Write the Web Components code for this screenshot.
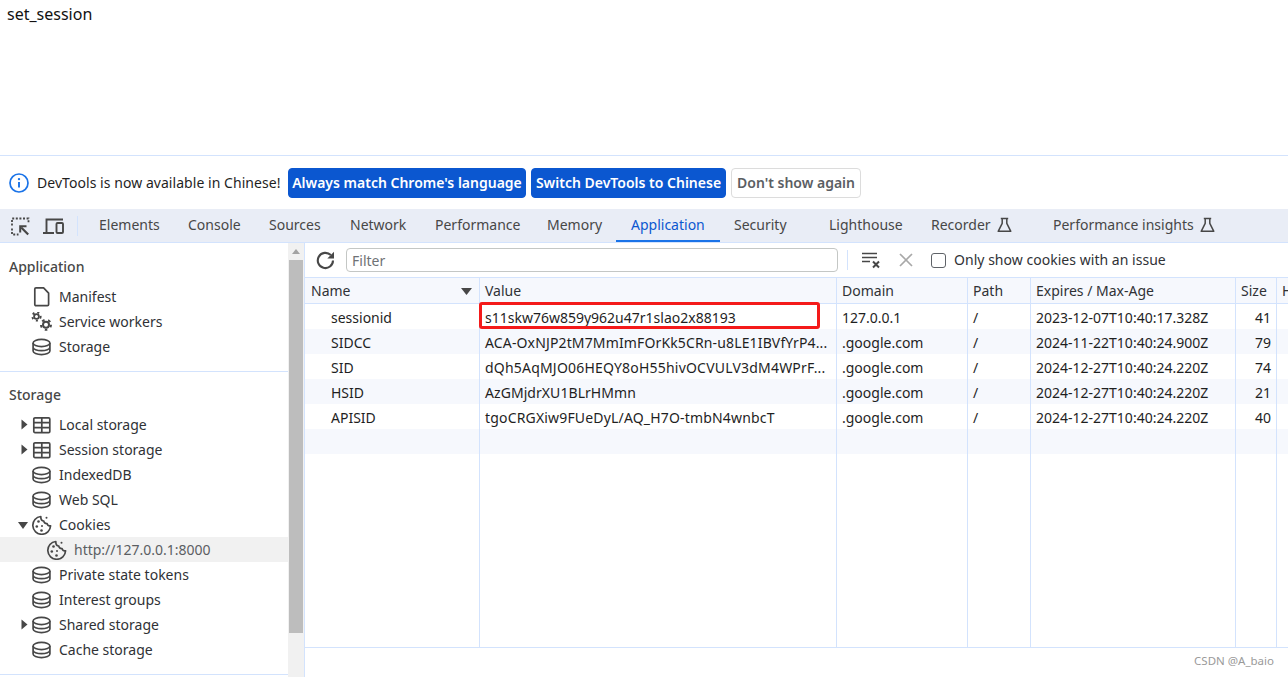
<!DOCTYPE html>
<html>
<head>
<meta charset="utf-8">
<title>set_session</title>
<style>
  html, body { margin: 0; height: 100%; overflow: hidden; background: #fff; }
  body { font-family: "Noto Sans", "Open Sans", sans-serif; font-size: 14px; color: #303236; }
</style>
</head>
<body>
<set-session-page></set-session-page>
<devtools-infobar></devtools-infobar>
<devtools-tabs></devtools-tabs>
<devtools-panel></devtools-panel>

<script>
const INK = '#474747';

// teeth are a dashed ring round a plain ring
const gear = (cx, cy, r, w, dash, gap) => `
  <circle cx="${cx}" cy="${cy}" r="${r}" fill="none" stroke="${INK}" stroke-width="${w}"/>
  <circle cx="${cx}" cy="${cy}" r="${r + w}" fill="none" stroke="${INK}" stroke-width="${w}" stroke-dasharray="${dash} ${gap}"/>`;

const ICONS = {
  db: `<svg width="20" height="20" viewBox="0 0 20 20" fill="none" stroke="${INK}" stroke-width="1.7"><ellipse cx="10.500" cy="6" rx="8.400" ry="3.600"/><path d="M2.100 6v8c0 2 3.800 3.600 8.400 3.600s8.400-1.600 8.400-3.600V6M2.100 10.200c0 2 3.800 3.500 8.400 3.500s8.400-1.500 8.400-3.500"/></svg>`,
  table: `<svg width="20" height="20" viewBox="0 0 20 20" fill="none" stroke="${INK}" stroke-width="1.700"><rect x="2.800" y="2.800" width="16" height="14.800" rx="1.200"/><path d="M2.800 7.700h16M2.800 12.600h16M10.800 2.800v14.800"/></svg>`,
  page: `<svg width="20" height="20" viewBox="0 0 20 20" fill="none" stroke="${INK}" stroke-width="1.700" stroke-linejoin="round"><path d="M5 .9h7.600l5 5.200v11.400a1.200 1.200 0 0 1-1.200 1.200H5a1.200 1.200 0 0 1-1.200-1.200V2.100A1.200 1.200 0 0 1 5 .9z"/></svg>`,
  gears: `<svg width="22" height="20" viewBox="0 0 22 20">${gear(5.500, 4.500, 2.400, 1.800, 2.100, 2.900)}${gear(15, 12.800, 3, 2, 2.600, 3.680)}</svg>`,
  cookie: `<svg width="21" height="20" viewBox="0 0 21 20" fill="none" stroke="${INK}" stroke-width="1.700"><path d="M9.800 1.500a8.900 8.900 0 1 0 9.800 9.300c-1.700.3-3.100-.6-3.500-2.200-1.700.2-3.200-.9-3.300-2.600C10.900 5.800 9.700 3.900 9.800 1.500z" stroke-linejoin="round"/><g fill="${INK}" stroke="none"><circle cx="7.500" cy="6.500" r="1.300"/><circle cx="5.800" cy="11.500" r="1.300"/><circle cx="11" cy="11" r="1"/><circle cx="10.500" cy="15.500" r="1.300"/><circle cx="15.500" cy="2.800" r="1"/></g></svg>`,
  flask: `<svg width="15" height="16" viewBox="0 0 15 16" fill="none" stroke="${INK}" stroke-width="1.500" stroke-linejoin="round"><path d="M3.800 1.500h7.400M5.200 1.500v4.800L1.200 14.300h12.600L9.800 6.300V1.500"/></svg>`
};

class SetSessionPage extends HTMLElement {
  constructor() {
    super();
    this.attachShadow({ mode: 'open' }).innerHTML = `
      <style>
        :host { display: block; height: 155px; box-sizing: border-box; padding: 4px 7px; background: #fff; }
        span { font: 16px/20px "Noto Sans", sans-serif; color: #111; }
      </style>
      <span>set_session</span>`;
  }
}

class DevtoolsInfobar extends HTMLElement {
  constructor() {
    super();
    this.attachShadow({ mode: 'open' }).innerHTML = `
      <style>
        :host { display: flex; align-items: center; height: 54px; box-sizing: border-box; border-top: 1px solid #d3e3fd; background: #fff; padding: 0 0 0 9px; color: #1f1f1f; }
        svg { margin-right: 8px; }
        .msg { width: 251px; white-space: nowrap; letter-spacing: .05px; }
        button { font: inherit; height: 30px; padding: 0; border-radius: 4px; border: 1px solid #0b57d0; background: #0b57d0; color: #fff; font-weight: 600; margin-right: 5px; white-space: nowrap; }
        button.plain { background: #fff; border-color: #dcdcdc; color: #5b5e63; }
      </style>
      <svg width="20" height="20" viewBox="0 0 20 20" fill="none"><circle cx="10" cy="10" r="9" stroke="#1a73e8" stroke-width="1.700"/><path d="M10 9v5.500" stroke="#1a73e8" stroke-width="1.900"/><circle cx="10" cy="6.100" r="1.200" fill="#1a73e8"/></svg>
      <span class="msg">DevTools is now available in Chinese!</span>
      <button style="width:238px">Always match Chrome's language</button>
      <button style="width:195px">Switch DevTools to Chinese</button>
      <button class="plain" style="width:130px">Don't show again</button>`;
  }
}

class DevtoolsTabs extends HTMLElement {
  constructor() {
    super();
    // tab widths are taken from the reference, not from the text
    const tabs = [
      ['Elements', 89], ['Console', 81], ['Sources', 81], ['Network', 85], ['Performance', 112],
      ['Memory', 83], ['Application', 104, 'active'], ['Security', 95], ['Lighthouse', 102],
      ['Recorder', 122, 'lab'], ['Performance insights', 180, 'lab']
    ];
    this.attachShadow({ mode: 'open' }).innerHTML = `
      <style>
        :host { display: flex; height: 34px; box-sizing: border-box; background: #e9edf6; border-bottom: 1px solid #d3e3fd; color: #474747; }
        .tools { display: flex; align-items: center; width: 85px; height: 33px; box-sizing: border-box; padding-left: 10px; flex: none; }
        .tools svg + svg { margin-left: 13px; }
        .sep { width: 1px; height: 20px; background: #d3e3fd; margin-left: 13px; }
        .tab { box-sizing: border-box; display: flex; align-items: center; gap: 6px; padding: 0 0 2px 14px; height: 33px; white-space: nowrap; flex: none; }
        .tab.active { color: #0b57d0; border-bottom: 2px solid #1a73e8; padding: 0 0 0 15px; }
        .tab svg { flex: none; }
      </style>
      <div class="tools">
        <svg width="20" height="20" viewBox="0 0 20 20" fill="none" stroke="${INK}" stroke-width="1.800"><path d="M2 9.500V2.500h16.500v5" stroke-dasharray="2 1.600"/><path d="M2 12.500v6h6.500" stroke-dasharray="2 1.600"/><path d="M18.200 18.500l-7-7" stroke-width="2.200"/><path d="M10.200 16.500v-6.300h6.300" stroke-width="2"/></svg>
        <svg width="21" height="20" viewBox="0 0 21 20" fill="none" stroke="${INK}" stroke-width="1.900"><path d="M3.500 16V3.500H20M0 17h11"/><rect x="13.500" y="7" width="6.500" height="10" rx="1"/></svg>
        <span class="sep"></span>
      </div>
      ${tabs.map(([name, w, kind]) => `<div class="tab ${kind || ''}" style="width:${w}px"><span>${name}</span>${kind === 'lab' ? ICONS.flask : ''}</div>`).join('')}`;
  }
}

class TreeItem extends HTMLElement {
  constructor() {
    super();
    this.attachShadow({ mode: 'open' });
  }
  connectedCallback() {
    const icon = ICONS[this.getAttribute('icon')] || ICONS.db;
    const arrow = this.getAttribute('arrow');
    const level = +(this.getAttribute('level') || 0);
    const tri = arrow === 'right'
      ? `<svg width="7" height="11" viewBox="0 0 7 11"><path d="M.5.500l6 5-6 5z" fill="${INK}"/></svg>`
      : arrow === 'down'
        ? `<svg width="10" height="7" viewBox="0 0 10 7"><path d="M0 0h10L5 7z" fill="${INK}"/></svg>`
        : '';
    this.shadowRoot.innerHTML = `
      <style>
        :host { display: flex; align-items: center; height: 25px; box-sizing: border-box; padding-left: ${level ? 46 : 31}px; position: relative; white-space: nowrap; color: #303236; }
        :host([selected]) { background: #f1f1f1; color: #5b5e63; }
        .arrow { position: absolute; left: ${arrow === 'down' ? 18 : 21}px; top: ${arrow === 'down' ? 10 : 7}px; display: flex; }
        .icon { width: 28px; display: flex; align-items: center; flex: none; }
      </style>
      <span class="arrow">${tri}</span>
      <span class="icon">${icon}</span>
      <slot></slot>`;
  }
}

class SideGroup extends HTMLElement {
  constructor() {
    super();
    this.attachShadow({ mode: 'open' }).innerHTML = `
      <style>
        :host { display: block; border-bottom: 1px solid #d3e3fd; padding-bottom: 12px; }
        h3 { margin: 0; padding: 12px 0 4px 9px; height: 25px; font: 500 14px/24px "Noto Sans", sans-serif; color: #474747; }
        :host([tight]) h3 { padding-top: 11px; }
      </style>
      <h3><slot name="title"></slot></h3>
      <slot></slot>`;
  }
}

class CookieTable extends HTMLElement {
  constructor() {
    super();
    const cols = '175px 357px 131px 63px 205px 41px 1fr';
    const rows = [
      ['sessionid', 's11skw76w859y962u47r1slao2x88193', '127.0.0.1', '/', '2023-12-07T10:40:17.328Z', '41', 0],
      ['SIDCC', 'ACA-OxNJP2tM7MmImFOrKk5CRn-u8LE1IBVfYrP4...', '.google.com', '/', '2024-11-22T10:40:24.900Z', '79', .14],
      ['SID', 'dQh5AqMJO06HEQY8oH55hivOCVULV3dM4WPrF...', '.google.com', '/', '2024-12-27T10:40:24.220Z', '74', .2],
      ['HSID', 'AzGMjdrXU1BLrHMmn', '.google.com', '/', '2024-12-27T10:40:24.220Z', '21', .06],
      ['APISID', 'tgoCRGXiw9FUeDyL/AQ_H7O-tmbN4wnbcT', '.google.com', '/', '2024-12-27T10:40:24.220Z', '40', .17],
      ['', '', '', '', '', '', 0]
    ];
    const heads = ['Name', 'Value', 'Domain', 'Path', 'Expires / Max-Age', 'Size', 'H'];
    this.attachShadow({ mode: 'open' }).innerHTML = `
      <style>
        :host { display: flex; flex-direction: column; flex: 1; min-height: 0; position: relative; border-top: 1px solid #d3e3fd; color: #1f1f1f; }
        .row { display: grid; grid-template-columns: ${cols}; height: 25px; flex: none; }
        .row > div { box-sizing: border-box; padding: 0 5px; line-height: 27px; white-space: nowrap; overflow: hidden; border-right: 1px solid #d3e3fd; }
        .row > div:last-child { border-right: 0; }
        .head { height: 26px; background: #f6f8fd; border-bottom: 1px solid #d3e3fd; box-sizing: border-box; color: #303236; }
        .row.head > div { line-height: 26px; position: relative; }
        .head > div:first-child { padding-left: 6px; }
        .row:nth-of-type(odd):not(.head) { background: #f6f8fd; }
        .row > .name { padding-left: 26px; }
        .size { text-align: right; }
        .tri { position: absolute; right: 7px; top: 10px; }
        .rest { flex: 1; display: grid; grid-template-columns: ${cols}; border-bottom: 1px solid #d3e3fd; min-height: 0; }
        .rest > div { border-right: 1px solid #d3e3fd; }
        .rest > div:last-child { border-right: 0; }
        .foot { height: 29px; flex: none; }
        .mark { position: absolute; left: 174px; top: 24px; width: 341px; height: 27px; box-sizing: border-box; border: 3px solid #f41a1a; border-radius: 3px; }
        .wm { position: absolute; right: 14px; bottom: 9px; font: 11.500px "Noto Sans", sans-serif; color: #9a9a9a; }
      </style>
      <div class="row head">${heads.map((h, i) => `<div>${h}${i === 0 ? `<svg class="tri" width="11" height="7" viewBox="0 0 11 7"><path d="M0 0h11L5.500 7z" fill="${INK}"/></svg>` : ''}</div>`).join('')}</div>
      ${rows.map(r => `<div class="row">${r.slice(0, 6).map((c, i) => `<div class="${i === 0 ? 'name' : i === 5 ? 'size' : ''}"${i === 1 ? ` style="letter-spacing:${r[6]}px"` : ''}>${c}</div>`).join('')}<div></div></div>`).join('')}
      <div class="rest">${heads.map(() => '<div></div>').join('')}</div>
      <div class="foot"></div>
      <div class="mark"></div>
      <div class="wm">CSDN @A_baio</div>`;
  }
}

class DevtoolsPanel extends HTMLElement {
  constructor() {
    super();
    this.attachShadow({ mode: 'open' }).innerHTML = `
      <style>
        :host { display: flex; height: 434px; background: #fff; }
        .side { width: 288px; flex: none; overflow: hidden; }
        .scroll { width: 16px; flex: none; background: #f1f1f1; border-right: 1px solid #d3e3fd; display: flex; flex-direction: column; align-items: center; }
        .scroll .up { margin-top: 6px; width: 0; height: 0; border: 4px solid transparent; border-top: 0; border-bottom: 5px solid #a3a3a3; }
        .scroll .thumb { margin-top: 6px; width: 14px; height: 373px; background: #bdbdbd; }
        .main { flex: 1; min-width: 0; display: flex; flex-direction: column; }
        .bar { display: flex; align-items: center; height: 34px; flex: none; box-sizing: border-box; color: #303236; }
        .filter { width: 492px; height: 24px; box-sizing: border-box; border: 1px solid #c4c7c5; border-radius: 4px; margin-left: 10px; padding-left: 5px; line-height: 24px; color: #6f7276; }
        .sep { width: 1px; height: 20px; background: #d3e3fd; margin: 0 13px 0 9px; }
        .check { width: 15px; height: 15px; box-sizing: border-box; border: 1px solid #5f6368; border-radius: 3px; margin: 0 8px 0 18px; }
        .label { padding-bottom: 2px; letter-spacing: .03px; }
      </style>
      <div class="side"><slot></slot></div>
      <div class="scroll"><span class="up"></span><span class="thumb"></span></div>
      <div class="main">
        <div class="bar">
          <svg style="margin-left:10px" width="21" height="21" viewBox="0 0 21 21" fill="none" stroke="${INK}" stroke-width="2.100"><path d="M18 10.500a7.600 7.600 0 1 1-2.200-5.400"/><path d="M19 1.800v6.700h-6.700z" fill="${INK}" stroke="none"/></svg>
          <div class="filter">Filter</div>
          <span class="sep"></span>
          <svg width="20" height="18" viewBox="0 0 20 18" fill="none" stroke="${INK}" stroke-width="1.600"><path d="M1 2.500h15M1 6.500h15M1 10.500h8"/><path d="M12 10.500l6 6M18 10.500l-6 6" stroke-width="2"/></svg>
          <svg style="margin-left:18px" width="14" height="14" viewBox="0 0 14 14" fill="none" stroke="#a8a8a8" stroke-width="1.700"><path d="M1 1l12 12M13 1L1 13"/></svg>
          <span class="check"></span>
          <span class="label">Only show cookies with an issue</span>
        </div>
        <cookie-table></cookie-table>
      </div>`;
  }
}

customElements.define('set-session-page', SetSessionPage);
customElements.define('devtools-infobar', DevtoolsInfobar);
customElements.define('devtools-tabs', DevtoolsTabs);
customElements.define('tree-item', TreeItem);
customElements.define('side-group', SideGroup);
customElements.define('cookie-table', CookieTable);
customElements.define('devtools-panel', DevtoolsPanel);

document.querySelector('devtools-panel').innerHTML = `
  <side-group>
    <span slot="title">Application</span>
    <tree-item icon="page">Manifest</tree-item>
    <tree-item icon="gears">Service workers</tree-item>
    <tree-item icon="db">Storage</tree-item>
  </side-group>
  <side-group tight>
    <span slot="title">Storage</span>
    <tree-item icon="table" arrow="right">Local storage</tree-item>
    <tree-item icon="table" arrow="right">Session storage</tree-item>
    <tree-item icon="db">IndexedDB</tree-item>
    <tree-item icon="db">Web SQL</tree-item>
    <tree-item icon="cookie" arrow="down">Cookies</tree-item>
    <tree-item icon="cookie" level="1" selected>http://127.0.0.1:8000</tree-item>
    <tree-item icon="db">Private state tokens</tree-item>
    <tree-item icon="db">Interest groups</tree-item>
    <tree-item icon="db" arrow="right">Shared storage</tree-item>
    <tree-item icon="db">Cache storage</tree-item>
  </side-group>`;
</script>
</body>
</html>
